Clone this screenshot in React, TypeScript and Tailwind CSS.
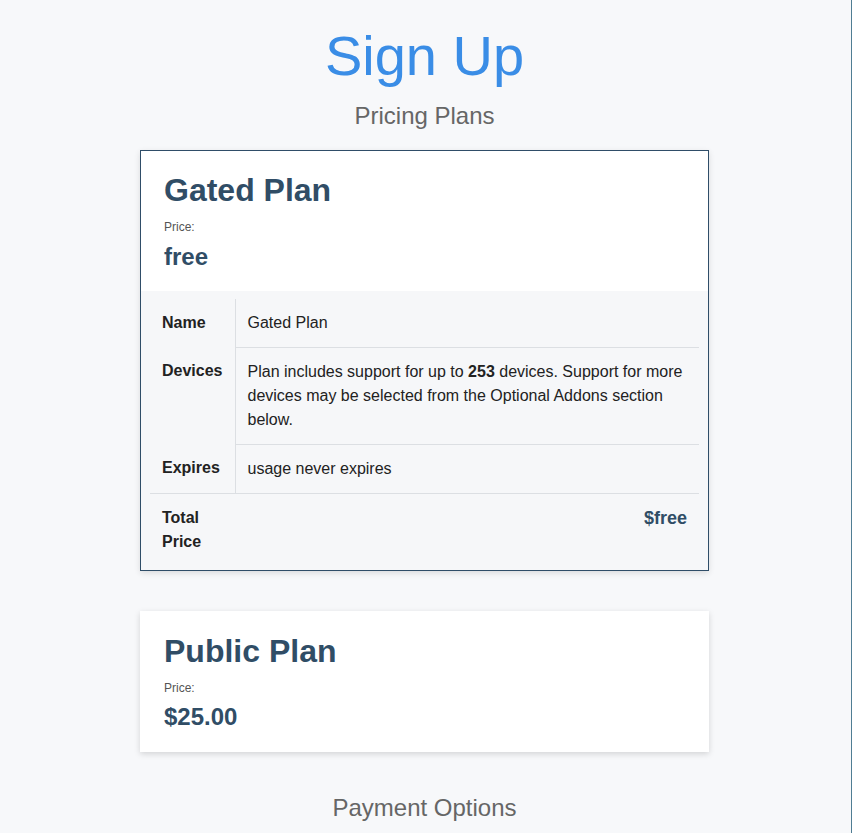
export default function App() {
  return (
    <div
      className="min-h-screen border-r border-[#4f7d93] bg-[#f7f8fa] pr-[2px] pb-10"
      style={{ fontFamily: '"Liberation Sans", Arial, sans-serif' }}
    >
      <h1 className="pt-[22px] text-center text-[56px] leading-[1.2] text-[#3a8de6]">Sign Up</h1>
      <h2 className="mt-[13px] text-center text-[24px] leading-[1.2] text-[#666]">Pricing Plans</h2>

      <div className="mx-auto mt-[19px] w-[569px]">
        {/* Gated plan */}
        <div className="border border-[#2f4d68] bg-white shadow-[0_2px_6px_rgba(0,0,0,0.12)]">
          <div className="px-[23px] pt-[20px] pb-[19px]">
            <div className="text-[32px] font-bold leading-[1.2] text-[#304d66]">Gated Plan</div>
            <div className="mt-[11px] text-[12px] leading-[1.2] text-[#555]">Price:</div>
            <div className="mt-[8px] text-[24px] font-bold leading-[1.2] text-[#304d66]">free</div>
          </div>
          <div className="bg-[#f6f7f9] px-[9px] pt-[8px] pb-[4px]">
            <table className="w-full border-collapse text-[16px] leading-[24px] text-[#222]">
              <tbody>
                <tr>
                  <th className="w-[85px] border-r border-[#dcdfe3] px-[12px] py-[12px] text-left align-top font-bold">Name</th>
                  <td className="border-b border-[#dcdfe3] px-[12px] py-[12px] align-top">Gated Plan</td>
                </tr>
                <tr>
                  <th className="border-r border-[#dcdfe3] px-[12px] py-[12px] text-left align-top font-bold">Devices</th>
                  <td className="border-b border-[#dcdfe3] px-[12px] py-[12px] align-top">
                    Plan includes support for up to <strong>253</strong> devices. Support for more devices may be
                    selected from the Optional Addons section below.
                  </td>
                </tr>
                <tr className="border-b border-[#dcdfe3]">
                  <th className="border-r border-[#dcdfe3] px-[12px] py-[12px] text-left align-top font-bold">Expires</th>
                  <td className="px-[12px] py-[12px] align-top">usage never expires</td>
                </tr>
                <tr>
                  <th className="px-[12px] py-[12px] text-left align-top font-bold">Total Price</th>
                  <td className="px-[12px] py-[12px] text-right align-top text-[18px] font-bold text-[#304d66]">$free</td>
                </tr>
              </tbody>
            </table>
          </div>
        </div>

        {/* Public plan */}
        <div className="mt-[40px] bg-white px-[24px] pt-[21px] pb-[20px] shadow-[0_2px_6px_rgba(0,0,0,0.15)]">
          <div className="text-[32px] font-bold leading-[1.2] text-[#304d66]">Public Plan</div>
          <div className="mt-[11px] text-[12px] leading-[1.2] text-[#555]">Price:</div>
          <div className="mt-[8px] text-[24px] font-bold leading-[1.2] text-[#304d66]">$25.00</div>
        </div>
      </div>

      <h2 className="mt-[42px] text-center text-[24px] leading-[1.2] text-[#666]">Payment Options</h2>
    </div>
  );
}
